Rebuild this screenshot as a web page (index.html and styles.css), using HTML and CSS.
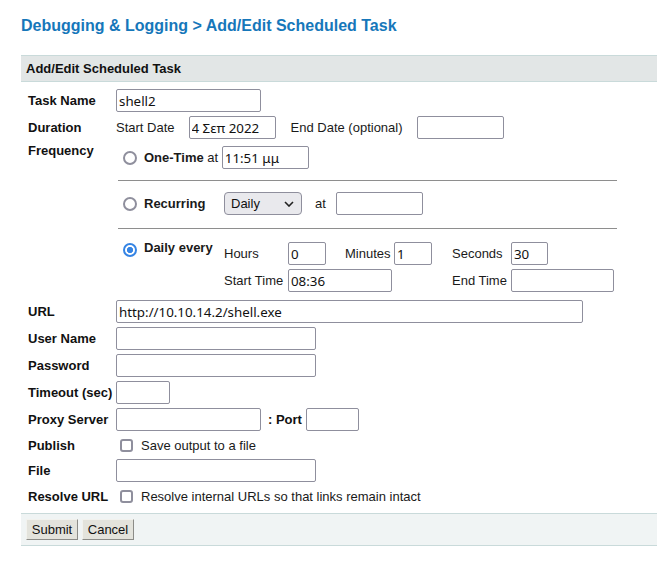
FILE: index.html
```html
<!DOCTYPE html>
<html>
<head>
<meta charset="utf-8">
<title>Add/Edit Scheduled Task</title>
<link rel="stylesheet" href="styles.css">
</head>
<body>
<div class="page">
  <h1 class="title">Debugging &amp; Logging &gt; Add/Edit Scheduled Task</h1>
  <div class="panel">
    <div class="panel-head">Add/Edit Scheduled Task</div>
    <div class="form">
      <div class="lbl">Task Name</div>
      <div class="fld"><input class="in w145" value="shell2"></div>

      <div class="lbl">Duration</div>
      <div class="fld">
        <span class="sd">Start Date</span><input class="in w87" value="4 Σεπ 2022"><span class="ed">End Date (optional)</span><input class="in w87">
      </div>

      <div class="lbl top">Frequency</div>
      <div class="freq">
        <div class="frow">
          <div class="fc1 wide"><input type="radio" class="rad" name="f"><span class="opt"><b>One-Time</b> at <input class="in w87" value="11:51 μμ"></span></div>
        </div>
        <hr class="sep">
        <div class="frow">
          <div class="fc1"><input type="radio" class="rad" name="f"><b>Recurring</b></div>
          <div class="fc2">
            <span class="selwrap"><select class="sel"><option>Daily</option></select><svg class="chev" width="10" height="6" viewBox="0 0 10 6"><path d="M1 1 L5 5 L9 1" fill="none" stroke="#222" stroke-width="1.6"/></svg></span>
            <span class="at">at</span><input class="in w87">
          </div>
        </div>
        <hr class="sep sep2">
        <div class="frow daily">
          <div class="fc1 up"><input type="radio" class="rad" name="f" checked><b>Daily every</b></div>
          <div class="dgrid">
            <span class="c1">Hours</span><input class="in w38 c2" value="0">
            <span class="c4">Minutes</span><input class="in w38 c5" value="1">
            <span class="c7">Seconds</span><input class="in w37 c8" value="30">
            <span class="c1">Start Time</span><input class="in w104 c2s" value="08:36">
            <span class="c7">End Time</span><input class="in w103 c8">
          </div>
        </div>
      </div>

      <div class="lbl">URL</div>
      <div class="fld"><input class="in w467" value="http://10.10.14.2/shell.exe"></div>

      <div class="lbl">User Name</div>
      <div class="fld"><input class="in w200"></div>

      <div class="lbl">Password</div>
      <div class="fld"><input class="in w200" type="password"></div>

      <div class="lbl">Timeout (sec)</div>
      <div class="fld"><input class="in w54"></div>

      <div class="lbl">Proxy Server</div>
      <div class="fld"><input class="in w145"><b class="port">: Port</b><input class="in w53"></div>

      <div class="lbl">Publish</div>
      <div class="fld chk"><input type="checkbox" class="cb"><span>Save output to a file</span></div>

      <div class="lbl">File</div>
      <div class="fld"><input class="in w200"></div>

      <div class="lbl">Resolve URL</div>
      <div class="fld chk"><input type="checkbox" class="cb"><span>Resolve internal URLs so that links remain intact</span></div>
    </div>
    <div class="panel-foot">
      <button class="btn">Submit</button>
      <button class="btn">Cancel</button>
    </div>
  </div>
</div>
</body>
</html>
```

FILE: styles.css
```css
* { box-sizing: border-box; }
html, body { overflow: hidden; }
body {
  margin: 0;
  background: #fff;
  font-family: "Liberation Sans", Arial, sans-serif;
  font-size: 13px;
  line-height: 15px;
  color: #1a1a1a;
}
.page { padding: 16px 0 0 21px; }
.title {
  margin: 0;
  font-size: 16px;
  line-height: 20px;
  font-weight: bold;
  color: #1677ba;
}
.panel { margin-top: 19px; }
.panel-head {
  height: 27px;
  background: #e2e6e6;
  border-top: 1px solid #c9dada;
  border-bottom: 1px solid #c9dada;
  font-weight: bold;
  padding-left: 5px;
  line-height: 25px;
  color: #111;
}
.form {
  display: grid;
  grid-template-columns: 88px 1fr;
  row-gap: 4px;
  padding: 7px 0 0 7px;
}
.lbl { font-weight: bold; align-self: center; color: #111; }
.lbl.top { align-self: start; }
.fld { display: flex; align-items: center; min-height: 23px; }
.fld.chk { height: 20px; min-height: 20px; }

.in {
  height: 23px;
  border: 1px solid #8f8f9d;
  border-radius: 2px;
  padding: 0 2px;
  margin: 0;
  font-family: "Noto Sans", "Open Sans", sans-serif;
  font-size: 13.33px;
  color: #111;
  background: #fff;
}
.w37 { width: 37px; }
.w38 { width: 38px; }
.w53 { width: 53px; }
.w54 { width: 54px; }
.w87 { width: 87px; }
.w103 { width: 103px; }
.w104 { width: 104px; }
.w145 { width: 145px; }
.w200 { width: 200px; }
.w467 { width: 467px; }

.sd { margin-right: 14px; }
.ed { margin: 0 14px 0 15px; }

.freq { padding: 3px 0 4px 0; }
.frow { display: flex; align-items: center; height: 23px; }
.frow.daily { height: auto; align-items: flex-start; }
.fc1 {
  width: 108px;
  flex: none;
  display: flex;
  align-items: center;
  gap: 7px;
  padding-left: 7px;
}
.fc1.wide { width: auto; }
.fc1.up { align-items: flex-start; margin-top: -2px; }
.fc1.up .rad { margin-top: 3px; }
.fc2 { display: flex; align-items: center; }
.opt { display: inline-flex; align-items: center; white-space: pre; }

.rad {
  -webkit-appearance: none;
  appearance: none;
  width: 14px;
  height: 14px;
  margin: 0;
  flex: none;
  border: 2px solid #8f8f9d;
  border-radius: 50%;
  background: #fff;
}
.rad:checked {
  border-color: #3584e4;
  background: radial-gradient(circle, #3584e4 0 2.8px, #fff 3.4px);
}

.sep {
  border: 0;
  height: 1px;
  background: #8e8e8e;
  width: 499px;
  margin: 11px 0 11px 2px;
}
.sep2 { margin: 13px 0 13px 2px; }

.selwrap { position: relative; display: inline-block; height: 23px; }
.sel {
  -webkit-appearance: none;
  appearance: none;
  width: 78px;
  height: 23px;
  margin: 0;
  border: 1px solid #8f8f9d;
  border-radius: 4px;
  background: #e9e9ed;
  padding: 0 0 0 6px;
  font-family: "Liberation Sans", Arial, sans-serif;
  font-size: 13px;
  color: #111;
}
.chev { position: absolute; left: 60px; top: 9px; }
.at { margin: 0 10px 0 13px; }

.dgrid {
  display: grid;
  grid-template-columns: 64px 38px 19px 49px 38px 20px 59px auto;
  grid-template-rows: 23px 23px;
  row-gap: 4px;
  align-items: center;
}
.c1 { grid-column: 1; }
.c2 { grid-column: 2; }
.c2s { grid-column: 2 / 7; justify-self: start; }
.c4 { grid-column: 4; }
.c5 { grid-column: 5; }
.c7 { grid-column: 7; }
.c8 { grid-column: 8; justify-self: start; }

.port { margin: 0 4px 0 7px; color: #111; }

.cb {
  -webkit-appearance: none;
  appearance: none;
  width: 13px;
  height: 13px;
  margin: 0 8px 0 4px;
  flex: none;
  border: 2px solid #8f8f9d;
  border-radius: 3px;
  background: #fff;
}

.panel-foot {
  margin-top: 7px;
  background: #f0f4f4;
  border-top: 1px solid #c9dada;
  border-bottom: 1px solid #c9dada;
  padding: 5px;
  display: flex;
  gap: 4px;
}
.btn {
  width: 52px;
  height: 21px;
  margin: 0;
  padding: 0;
  font-family: "Liberation Sans", Arial, sans-serif;
  font-size: 13px;
  color: #111;
  background: #e3e3dc;
  border: 1px solid;
  border-color: #f2f2ee #8c8c88 #8c8c88 #f2f2ee;
  border-radius: 0;
}
```
